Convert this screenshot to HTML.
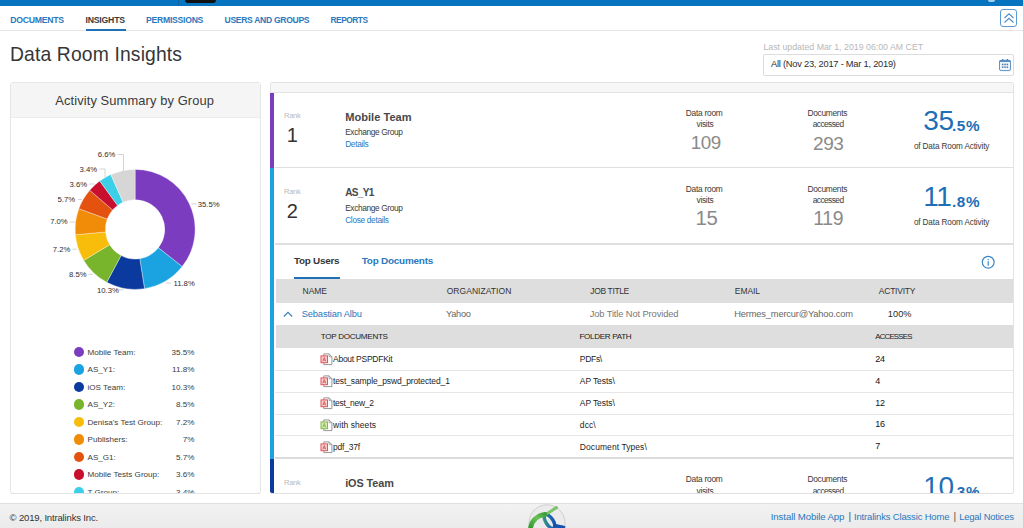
<!DOCTYPE html>
<html><head><meta charset="utf-8"><title>Data Room Insights</title>
<style>
html,body{margin:0;padding:0;}
body{width:1024px;height:528px;overflow:hidden;position:relative;background:#fff;font-family:"Liberation Sans",sans-serif;}
.t{position:absolute;white-space:pre;line-height:1;}
.abs{position:absolute;}
</style></head><body>
<!-- top bar -->
<div class="abs" style="left:0;top:0;width:1023px;height:6.4px;background:#0674bf"></div>
<div class="abs" style="left:185px;top:0;width:31px;height:3.3px;background:#111;border-radius:0 0 3px 3px"></div>
<div class="abs" style="left:178px;top:0;width:1px;height:6px;background:#0a62a4"></div>
<div class="abs" style="left:988px;top:0;width:7px;height:1.5px;background:#9fd0f2;border-radius:0 0 3px 3px"></div>
<!-- nav border -->
<div class="abs" style="left:0;top:30px;width:1024px;height:1px;background:#e6e6e6"></div>
<div class="abs" style="left:85.5px;top:28.5px;width:40px;height:2.5px;background:#1f70b6"></div>
<!-- chevron button -->
<div class="abs" style="left:999.7px;top:9px;width:15.8px;height:16.3px;border:1px solid #5a9ad2;border-radius:3px;box-sizing:content-box"></div>
<svg class="abs" style="left:1000px;top:9px" width="18" height="19" viewBox="0 0 18 19"><polyline points="4.5,9 9,4.8 13.5,9" fill="none" stroke="#4f8fc8" stroke-width="1.1"/><polyline points="4.5,13.5 9,9.3 13.5,13.5" fill="none" stroke="#4f8fc8" stroke-width="1.1"/></svg>
<!-- right scrollbar line -->
<div class="abs" style="left:1023px;top:0;width:1px;height:528px;background:#d0d0d0"></div>
<!-- date box -->
<div class="abs" style="left:763px;top:54px;width:249px;height:20px;border:1px solid #dcdcdc;border-radius:2px;background:#fff;box-sizing:content-box"></div>
<svg class="abs" style="left:998px;top:58px" width="15" height="14" viewBox="0 0 15 14"><rect x="1.5" y="2.3" width="11" height="10.3" rx="1.6" fill="#f0f6fc" stroke="#4a86c0" stroke-width="0.9"/><rect x="1.5" y="2.3" width="11" height="1.6" fill="#4a86c0"/><rect x="4" y="1" width="1.3" height="2" fill="#4a86c0"/><rect x="8.7" y="1" width="1.3" height="2" fill="#4a86c0"/><g fill="#4a78aa"><rect x="3.9" y="5.7" width="1.5" height="1.5"/><rect x="6.25" y="5.7" width="1.5" height="1.5"/><rect x="8.6" y="5.7" width="1.5" height="1.5"/><rect x="3.9" y="8.4" width="1.5" height="1.5"/><rect x="6.25" y="8.4" width="1.5" height="1.5"/><rect x="8.6" y="8.4" width="1.5" height="1.5"/></g></svg>
<!-- left panel -->
<div class="abs" style="left:10px;top:82px;width:249px;height:410px;border:1px solid #e6e6e6;border-radius:3px;background:#fff;box-sizing:content-box;overflow:hidden">
  <div class="abs" style="left:0;top:0;width:249px;height:34px;background:#f5f5f5;border-bottom:1px solid #ececec"></div>
</div>
<div class="abs" style="left:0;top:0;width:260px;height:493px;overflow:hidden">
<svg style="position:absolute;left:0;top:0" width="260" height="300" viewBox="0 0 260 300"><g><path d="M135.10,169.40 A60,60 0 0 1 182.18,266.60 L158.40,247.81 A29.7,29.7 0 0 0 135.10,199.70 Z" fill="#7b3cc0" stroke="#fff" stroke-width="0.35" stroke-linejoin="round"/><path d="M182.18,266.60 A60,60 0 0 1 144.52,288.66 L139.76,258.73 A29.7,29.7 0 0 0 158.40,247.81 Z" fill="#1aa3e0" stroke="#fff" stroke-width="0.35" stroke-linejoin="round"/><path d="M144.52,288.66 A60,60 0 0 1 106.75,282.28 L121.07,255.58 A29.7,29.7 0 0 0 139.76,258.73 Z" fill="#0b3a9e" stroke="#fff" stroke-width="0.35" stroke-linejoin="round"/><path d="M106.75,282.28 A60,60 0 0 1 83.72,260.38 L109.66,244.73 A29.7,29.7 0 0 0 121.07,255.58 Z" fill="#78b52c" stroke="#fff" stroke-width="0.35" stroke-linejoin="round"/><path d="M83.72,260.38 A60,60 0 0 1 75.33,234.69 L105.52,232.02 A29.7,29.7 0 0 0 109.66,244.73 Z" fill="#f7bd0a" stroke="#fff" stroke-width="0.35" stroke-linejoin="round"/><path d="M75.33,234.69 A60,60 0 0 1 78.81,208.64 L107.23,219.12 A29.7,29.7 0 0 0 105.52,232.02 Z" fill="#f08c08" stroke="#fff" stroke-width="0.35" stroke-linejoin="round"/><path d="M78.81,208.64 A60,60 0 0 1 89.71,190.16 L112.63,209.98 A29.7,29.7 0 0 0 107.23,219.12 Z" fill="#e3520e" stroke="#fff" stroke-width="0.35" stroke-linejoin="round"/><path d="M89.71,190.16 A60,60 0 0 1 99.71,180.95 L117.58,205.42 A29.7,29.7 0 0 0 112.63,209.98 Z" fill="#c8102e" stroke="#fff" stroke-width="0.35" stroke-linejoin="round"/><path d="M99.71,180.95 A60,60 0 0 1 110.83,174.53 L123.09,202.24 A29.7,29.7 0 0 0 117.58,205.42 Z" fill="#3bd0e8" stroke="#fff" stroke-width="0.35" stroke-linejoin="round"/><path d="M110.83,174.53 A60,60 0 0 1 135.10,169.40 L135.10,199.70 A29.7,29.7 0 0 0 123.09,202.24 Z" fill="#d6d6d6" stroke="#fff" stroke-width="0.35" stroke-linejoin="round"/></g><g fill="none" stroke="#c8c8c8" stroke-width="0.8"><polyline points="117.5,154.5 123.5,154.5 123.5,171" />
<polyline points="99.5,169 105,169 105,177" />
<polyline points="89,184 94.5,184" />
<polyline points="78,199.5 82,199.5" />
<polyline points="69.8,222 74.9,222" />
<polyline points="72.4,249.2 76.6,249.2" />
<polyline points="88.5,274.4 92.8,274.4" />
<polyline points="118.4,289.8 123.5,289.8" />
<polyline points="166,283 171,283" />
<polyline points="191.5,203.8 196.5,203.8" /></g></svg>
<div style="position:absolute;left:73.8px;top:346.7px;width:10.6px;height:10.6px;border-radius:50%;background:#7b3cc0"></div><div style="position:absolute;left:73.8px;top:364.2px;width:10.6px;height:10.6px;border-radius:50%;background:#1aa3e0"></div><div style="position:absolute;left:73.8px;top:381.7px;width:10.6px;height:10.6px;border-radius:50%;background:#0b3a9e"></div><div style="position:absolute;left:73.8px;top:399.2px;width:10.6px;height:10.6px;border-radius:50%;background:#78b52c"></div><div style="position:absolute;left:73.8px;top:416.7px;width:10.6px;height:10.6px;border-radius:50%;background:#f7bd0a"></div><div style="position:absolute;left:73.8px;top:434.2px;width:10.6px;height:10.6px;border-radius:50%;background:#f08c08"></div><div style="position:absolute;left:73.8px;top:451.7px;width:10.6px;height:10.6px;border-radius:50%;background:#e3520e"></div><div style="position:absolute;left:73.8px;top:469.2px;width:10.6px;height:10.6px;border-radius:50%;background:#c8102e"></div><div style="position:absolute;left:73.8px;top:486.7px;width:10.6px;height:10.6px;border-radius:50%;background:#3bd0e8"></div>
</div>
<!-- right panel -->
<div class="abs" style="left:270px;top:82px;width:742px;height:410px;border:1px solid #e3e3e3;border-radius:2px;background:#fff;box-sizing:content-box;overflow:hidden">
  <div class="abs" style="left:0;top:0;width:742px;height:9px;background:#f7f7f7;border-bottom:1px solid #e3e3e3"></div>
  <div class="abs" style="left:3.5px;top:84px;width:742px;height:1.4px;background:#e0e0e0"></div>
  <div class="abs" style="left:4px;top:160.3px;width:738px;height:1.3px;background:#e0e0e0"></div>
  <div class="abs" style="left:5px;top:195.9px;width:737px;height:24px;background:#dedede"></div>
  <div class="abs" style="left:23px;top:193.5px;width:46px;height:2.5px;background:#1f70b6"></div>
  <div class="abs" style="left:5px;top:241.9px;width:737px;height:22.8px;background:#dedede"></div>
  <div class="abs" style="left:4px;top:286.8px;width:738px;height:1px;background:#e6e6e6"></div>
  <div class="abs" style="left:4px;top:308.6px;width:738px;height:1px;background:#e6e6e6"></div>
  <div class="abs" style="left:4px;top:330.6px;width:738px;height:1px;background:#e6e6e6"></div>
  <div class="abs" style="left:4px;top:352.4px;width:738px;height:1px;background:#e6e6e6"></div>
  <div class="abs" style="left:4px;top:374.3px;width:738px;height:1.5px;background:#dcdcdc"></div>
</div>
<div class="abs" style="left:270px;top:92.8px;width:4px;height:75px;background:#7b3cc0"></div>
<div class="abs" style="left:270px;top:167.8px;width:4px;height:291px;background:#1aa3e0"></div>
<div class="abs" style="left:270px;top:458.8px;width:4px;height:34.7px;background:#0b3a9e;border-radius:0 0 0 2px"></div>
<svg class="abs" style="left:981px;top:255px" width="15" height="15" viewBox="0 0 15 15"><circle cx="7.2" cy="7.2" r="5.9" fill="none" stroke="#3a87c8" stroke-width="1.2"/><rect x="6.6" y="4" width="1.2" height="1.2" fill="#3a87c8"/><rect x="6.6" y="6.2" width="1.2" height="4.6" fill="#3a87c8"/></svg>
<svg class="abs" style="left:282px;top:309px" width="12" height="10" viewBox="0 0 12 10"><polyline points="1.8,7.5 6,3.3 10.2,7.5" fill="none" stroke="#3a7fc0" stroke-width="1.2"/></svg>
<svg width="14" height="14" viewBox="0 0 14 14" style="position:absolute;left:320px;top:353.2px"><path d="M3.8,0.9 h5.3 l2.8,2.8 v7.9 h-8.1 z" fill="#fff" stroke="#8a8a8a" stroke-width="0.9"/><path d="M9.1,0.9 v2.8 h2.8" fill="none" stroke="#8a8a8a" stroke-width="0.7"/><rect x="1" y="2.9" width="6.5" height="6.8" fill="#f8d0d0" stroke="#e0555a" stroke-width="1"/><path d="M2.8,8.3 L4.25,4.4 L5.7,8.3 M3.3,7 H5.2" stroke="#e0555a" stroke-width="0.9" fill="none"/></svg><svg width="14" height="14" viewBox="0 0 14 14" style="position:absolute;left:320px;top:375.09999999999997px"><path d="M3.8,0.9 h5.3 l2.8,2.8 v7.9 h-8.1 z" fill="#fff" stroke="#8a8a8a" stroke-width="0.9"/><path d="M9.1,0.9 v2.8 h2.8" fill="none" stroke="#8a8a8a" stroke-width="0.7"/><rect x="1" y="2.9" width="6.5" height="6.8" fill="#f8d0d0" stroke="#e0555a" stroke-width="1"/><path d="M2.8,8.3 L4.25,4.4 L5.7,8.3 M3.3,7 H5.2" stroke="#e0555a" stroke-width="0.9" fill="none"/></svg><svg width="14" height="14" viewBox="0 0 14 14" style="position:absolute;left:320px;top:397.0px"><path d="M3.8,0.9 h5.3 l2.8,2.8 v7.9 h-8.1 z" fill="#fff" stroke="#8a8a8a" stroke-width="0.9"/><path d="M9.1,0.9 v2.8 h2.8" fill="none" stroke="#8a8a8a" stroke-width="0.7"/><rect x="1" y="2.9" width="6.5" height="6.8" fill="#f8d0d0" stroke="#e0555a" stroke-width="1"/><path d="M2.8,8.3 L4.25,4.4 L5.7,8.3 M3.3,7 H5.2" stroke="#e0555a" stroke-width="0.9" fill="none"/></svg><svg width="14" height="14" viewBox="0 0 14 14" style="position:absolute;left:320px;top:418.9px"><path d="M3.8,0.9 h5.3 l2.8,2.8 v7.9 h-8.1 z" fill="#fff" stroke="#8a8a8a" stroke-width="0.9"/><path d="M9.1,0.9 v2.8 h2.8" fill="none" stroke="#8a8a8a" stroke-width="0.7"/><rect x="1" y="2.9" width="6.5" height="6.8" fill="#d3eab0" stroke="#86b84e" stroke-width="1"/><path d="M2.8,8.3 L4.25,4.4 L5.7,8.3 M3.3,7 H5.2" stroke="#86b84e" stroke-width="0.9" fill="none"/></svg><svg width="14" height="14" viewBox="0 0 14 14" style="position:absolute;left:320px;top:440.79999999999995px"><path d="M3.8,0.9 h5.3 l2.8,2.8 v7.9 h-8.1 z" fill="#fff" stroke="#8a8a8a" stroke-width="0.9"/><path d="M9.1,0.9 v2.8 h2.8" fill="none" stroke="#8a8a8a" stroke-width="0.7"/><rect x="1" y="2.9" width="6.5" height="6.8" fill="#f8d0d0" stroke="#e0555a" stroke-width="1"/><path d="M2.8,8.3 L4.25,4.4 L5.7,8.3 M3.3,7 H5.2" stroke="#e0555a" stroke-width="0.9" fill="none"/></svg>
<!-- clip cover for iOS numbers handled via container -->
<!-- footer -->
<div class="abs" style="left:0;top:503px;width:1023px;height:25px;background:linear-gradient(#f2f2f2,#ebebeb);border-top:1px solid #e0e0e0;box-sizing:border-box"></div>
<svg class="abs" style="left:524px;top:502px" width="48" height="26" viewBox="0 0 48 26">
<defs><linearGradient id="gg" x1="0" y1="1" x2="1" y2="0"><stop offset="0" stop-color="#2f9a2a"/><stop offset="0.6" stop-color="#6cc05a"/><stop offset="1" stop-color="#3f9f3a"/></linearGradient>
<linearGradient id="bg" x1="0" y1="0" x2="1" y2="1"><stop offset="0" stop-color="#3a9a7a"/><stop offset="0.5" stop-color="#1f6fb0"/><stop offset="1" stop-color="#1250b0"/></linearGradient></defs>
<circle cx="23" cy="20.8" r="18" fill="#ebebeb" stroke="#c2c2c2" stroke-width="0.7"/>
<ellipse cx="25.5" cy="19.5" rx="3.6" ry="8" transform="rotate(-33 25.5 19.5)" fill="none" stroke="url(#bg)" stroke-width="3.4"/>
<path d="M29,23.5 C33,24 37,24.5 41,26" fill="none" stroke="#1452b0" stroke-width="3.4"/>
<path d="M21,12.3 C25,11 28,8 32.5,5.6" fill="none" stroke="#7cc46a" stroke-width="3" stroke-linecap="round"/><path d="M6.5,26.5 C7.5,19 13,13.5 21,12.3" fill="none" stroke="url(#gg)" stroke-width="4.8" stroke-linecap="round"/>
</svg>
<div class="t" style="left:10.30px;top:15.75px;font-size:8.68px;font-weight:700;color:#2a78bd;letter-spacing:-0.274px">DOCUMENTS</div>
<div class="t" style="left:85.50px;top:15.73px;font-size:8.70px;font-weight:700;color:#3a3a3a;letter-spacing:-0.212px">INSIGHTS</div>
<div class="t" style="left:146.00px;top:15.77px;font-size:8.65px;font-weight:700;color:#2a78bd;letter-spacing:-0.254px">PERMISSIONS</div>
<div class="t" style="left:224.50px;top:15.84px;font-size:8.57px;font-weight:700;color:#2a78bd;letter-spacing:-0.307px">USERS AND GROUPS</div>
<div class="t" style="left:330.50px;top:16.01px;font-size:8.37px;font-weight:700;color:#2a78bd;letter-spacing:-0.493px">REPORTS</div>
<div class="t" style="left:10.00px;top:45.23px;font-size:19.32px;font-weight:400;color:#363636;letter-spacing:0.142px">Data Room Insights</div>
<div class="t" style="left:763.40px;top:43.07px;font-size:8.77px;font-weight:400;color:#b8b8b8;letter-spacing:0.011px">Last updated Mar 1, 2019 06:00 AM CET</div>
<div class="t" style="left:771.00px;top:60.31px;font-size:9.32px;font-weight:400;color:#2e2e2e;letter-spacing:-0.243px">All (Nov 23, 2017 - Mar 1, 2019)</div>
<div class="t" style="left:55.30px;top:94.57px;font-size:12.90px;font-weight:400;color:#3a3a3a;letter-spacing:0.102px">Activity Summary by Group</div>
<div class="t" style="left:97.80px;top:151.28px;font-size:7.70px;font-weight:400;color:#2e2e2e;letter-spacing:0.000px">6.6%</div>
<div class="t" style="left:79.60px;top:166.08px;font-size:7.70px;font-weight:400;color:#2e2e2e;letter-spacing:0.000px">3.4%</div>
<div class="t" style="left:69.60px;top:181.08px;font-size:7.70px;font-weight:400;color:#2e2e2e;letter-spacing:0.000px">3.6%</div>
<div class="t" style="left:57.50px;top:196.08px;font-size:7.70px;font-weight:400;color:#2e2e2e;letter-spacing:0.000px">5.7%</div>
<div class="t" style="left:50.20px;top:218.48px;font-size:7.70px;font-weight:400;color:#2e2e2e;letter-spacing:0.000px">7.0%</div>
<div class="t" style="left:52.80px;top:245.88px;font-size:7.70px;font-weight:400;color:#2e2e2e;letter-spacing:0.000px">7.2%</div>
<div class="t" style="left:69.00px;top:271.08px;font-size:7.70px;font-weight:400;color:#2e2e2e;letter-spacing:0.000px">8.5%</div>
<div class="t" style="left:97.00px;top:287.08px;font-size:7.70px;font-weight:400;color:#2e2e2e;letter-spacing:0.000px">10.3%</div>
<div class="t" style="left:173.50px;top:280.08px;font-size:7.70px;font-weight:400;color:#2e2e2e;letter-spacing:0.000px">11.8%</div>
<div class="t" style="left:197.80px;top:200.88px;font-size:7.70px;font-weight:400;color:#2e2e2e;letter-spacing:0.000px">35.5%</div>
<div class="t" style="left:87.50px;top:348.94px;font-size:8.10px;font-weight:400;color:#3c3c3c;letter-spacing:0.000px">Mobile Team:</div>
<div class="t" style="left:171.47px;top:348.94px;font-size:8.10px;font-weight:400;color:#3c3c3c;letter-spacing:0.000px">35.5%</div>
<div class="t" style="left:87.50px;top:366.44px;font-size:8.10px;font-weight:400;color:#3c3c3c;letter-spacing:0.000px">AS_Y1:</div>
<div class="t" style="left:172.06px;top:366.44px;font-size:8.10px;font-weight:400;color:#3c3c3c;letter-spacing:0.000px">11.8%</div>
<div class="t" style="left:87.50px;top:383.94px;font-size:8.10px;font-weight:400;color:#3c3c3c;letter-spacing:0.000px">iOS Team:</div>
<div class="t" style="left:171.47px;top:383.94px;font-size:8.10px;font-weight:400;color:#3c3c3c;letter-spacing:0.000px">10.3%</div>
<div class="t" style="left:87.50px;top:401.44px;font-size:8.10px;font-weight:400;color:#3c3c3c;letter-spacing:0.000px">AS_Y2:</div>
<div class="t" style="left:175.95px;top:401.44px;font-size:8.10px;font-weight:400;color:#3c3c3c;letter-spacing:0.000px">8.5%</div>
<div class="t" style="left:87.50px;top:418.94px;font-size:8.10px;font-weight:400;color:#3c3c3c;letter-spacing:0.000px">Denisa's Test Group:</div>
<div class="t" style="left:175.95px;top:418.94px;font-size:8.10px;font-weight:400;color:#3c3c3c;letter-spacing:0.000px">7.2%</div>
<div class="t" style="left:87.50px;top:436.44px;font-size:8.10px;font-weight:400;color:#3c3c3c;letter-spacing:0.000px">Publishers:</div>
<div class="t" style="left:182.70px;top:436.44px;font-size:8.10px;font-weight:400;color:#3c3c3c;letter-spacing:0.000px">7%</div>
<div class="t" style="left:87.50px;top:453.94px;font-size:8.10px;font-weight:400;color:#3c3c3c;letter-spacing:0.000px">AS_G1:</div>
<div class="t" style="left:175.95px;top:453.94px;font-size:8.10px;font-weight:400;color:#3c3c3c;letter-spacing:0.000px">5.7%</div>
<div class="t" style="left:87.50px;top:471.44px;font-size:8.10px;font-weight:400;color:#3c3c3c;letter-spacing:0.000px">Mobile Tests Group:</div>
<div class="t" style="left:175.95px;top:471.44px;font-size:8.10px;font-weight:400;color:#3c3c3c;letter-spacing:0.000px">3.6%</div>
<div class="t" style="left:87.50px;top:488.94px;font-size:8.10px;font-weight:400;color:#3c3c3c;letter-spacing:0.000px">T Group:</div>
<div class="t" style="left:175.95px;top:488.94px;font-size:8.10px;font-weight:400;color:#3c3c3c;letter-spacing:0.000px">3.4%</div>
<div class="t" style="left:283.90px;top:112.37px;font-size:7.59px;font-weight:400;color:#b9b9b9;letter-spacing:-0.231px">Rank</div>
<div class="t" style="left:286.80px;top:125.26px;font-size:20.00px;font-weight:400;color:#333;letter-spacing:0.000px">1</div>
<div class="t" style="left:345.20px;top:111.64px;font-size:11.06px;font-weight:700;color:#484848;letter-spacing:0.030px">Mobile Team</div>
<div class="t" style="left:345.20px;top:127.85px;font-size:8.33px;font-weight:400;color:#3a3a3a;letter-spacing:-0.375px">Exchange Group</div>
<div class="t" style="left:345.20px;top:139.94px;font-size:8.33px;font-weight:400;color:#2a78bd;letter-spacing:-0.327px">Details</div>
<div class="t" style="left:685.80px;top:108.89px;font-size:8.40px;font-weight:400;color:#3a3a3a;letter-spacing:-0.260px">Data room</div>
<div class="t" style="left:696.50px;top:120.19px;font-size:8.40px;font-weight:400;color:#3a3a3a;letter-spacing:-0.289px">visits</div>
<div class="t" style="left:807.50px;top:108.89px;font-size:8.40px;font-weight:400;color:#3a3a3a;letter-spacing:-0.305px">Documents</div>
<div class="t" style="left:812.70px;top:120.19px;font-size:8.40px;font-weight:400;color:#3a3a3a;letter-spacing:-0.564px">accessed</div>
<div class="t" style="left:690.70px;top:133.78px;font-size:18.79px;font-weight:400;color:#8a8a8a;letter-spacing:-0.400px">109</div>
<div class="t" style="left:813.00px;top:133.57px;font-size:19.04px;font-weight:400;color:#8a8a8a;letter-spacing:-0.400px">293</div>
<div class="t" style="left:923.20px;top:106.74px;font-size:28.05px;font-weight:400;color:#1f6fb6;letter-spacing:-0.400px">35</div>
<div class="t" style="left:952.00px;top:117.54px;font-size:15.30px;font-weight:700;color:#1f6fb6;letter-spacing:0.618px">.5%</div>
<div class="t" style="left:913.90px;top:143.47px;font-size:8.18px;font-weight:400;color:#3a3a3a;letter-spacing:-0.131px">of Data Room Activity</div>
<div class="t" style="left:283.90px;top:188.37px;font-size:7.59px;font-weight:400;color:#b9b9b9;letter-spacing:-0.231px">Rank</div>
<div class="t" style="left:286.80px;top:201.26px;font-size:20.00px;font-weight:400;color:#333;letter-spacing:0.000px">2</div>
<div class="t" style="left:345.20px;top:188.48px;font-size:10.06px;font-weight:700;color:#484848;letter-spacing:-0.688px">AS_Y1</div>
<div class="t" style="left:345.20px;top:203.85px;font-size:8.33px;font-weight:400;color:#3a3a3a;letter-spacing:-0.375px">Exchange Group</div>
<div class="t" style="left:345.20px;top:215.96px;font-size:8.31px;font-weight:400;color:#2a78bd;letter-spacing:-0.315px">Close details</div>
<div class="t" style="left:685.80px;top:184.89px;font-size:8.40px;font-weight:400;color:#3a3a3a;letter-spacing:-0.260px">Data room</div>
<div class="t" style="left:696.50px;top:196.19px;font-size:8.40px;font-weight:400;color:#3a3a3a;letter-spacing:-0.289px">visits</div>
<div class="t" style="left:807.50px;top:184.89px;font-size:8.40px;font-weight:400;color:#3a3a3a;letter-spacing:-0.305px">Documents</div>
<div class="t" style="left:812.70px;top:196.19px;font-size:8.40px;font-weight:400;color:#3a3a3a;letter-spacing:-0.564px">accessed</div>
<div class="t" style="left:695.50px;top:208.46px;font-size:20.35px;font-weight:400;color:#8a8a8a;letter-spacing:-0.400px">15</div>
<div class="t" style="left:813.20px;top:209.26px;font-size:19.42px;font-weight:400;color:#8a8a8a;letter-spacing:-0.267px">119</div>
<div class="t" style="left:923.20px;top:182.74px;font-size:28.05px;font-weight:400;color:#1f6fb6;letter-spacing:-0.400px">11</div>
<div class="t" style="left:952.00px;top:193.54px;font-size:15.30px;font-weight:700;color:#1f6fb6;letter-spacing:0.618px">.8%</div>
<div class="t" style="left:913.90px;top:219.47px;font-size:8.18px;font-weight:400;color:#3a3a3a;letter-spacing:-0.131px">of Data Room Activity</div>
<div class="t" style="left:283.90px;top:478.87px;font-size:7.59px;font-weight:400;color:#b9b9b9;letter-spacing:-0.231px">Rank</div>
<div class="t" style="left:345.20px;top:478.29px;font-size:10.87px;font-weight:700;color:#484848;letter-spacing:-0.087px">iOS Team</div>
<div class="t" style="left:685.80px;top:475.39px;font-size:8.40px;font-weight:400;color:#3a3a3a;letter-spacing:-0.260px">Data room</div>
<div class="t" style="left:696.50px;top:486.69px;font-size:8.40px;font-weight:400;color:#3a3a3a;letter-spacing:-0.289px">visits</div>
<div class="t" style="left:807.50px;top:475.39px;font-size:8.40px;font-weight:400;color:#3a3a3a;letter-spacing:-0.305px">Documents</div>
<div class="t" style="left:812.70px;top:486.69px;font-size:8.40px;font-weight:400;color:#3a3a3a;letter-spacing:-0.564px">accessed</div>
<div class="t" style="left:923.20px;top:473.24px;font-size:28.05px;font-weight:400;color:#1f6fb6;letter-spacing:-0.400px">10</div>
<div class="t" style="left:952.00px;top:484.04px;font-size:15.30px;font-weight:700;color:#1f6fb6;letter-spacing:0.618px">.3%</div>
<div class="t" style="left:293.90px;top:255.93px;font-size:9.89px;font-weight:700;color:#363636;letter-spacing:-0.240px">Top Users</div>
<div class="t" style="left:361.70px;top:255.88px;font-size:9.94px;font-weight:700;color:#2a78bd;letter-spacing:-0.219px">Top Documents</div>
<div class="t" style="left:302.50px;top:287.20px;font-size:8.50px;font-weight:400;color:#333;letter-spacing:-0.011px">NAME</div>
<div class="t" style="left:446.70px;top:287.20px;font-size:8.50px;font-weight:400;color:#333;letter-spacing:0.048px">ORGANIZATION</div>
<div class="t" style="left:590.30px;top:287.20px;font-size:8.50px;font-weight:400;color:#333;letter-spacing:-0.366px">JOB TITLE</div>
<div class="t" style="left:734.80px;top:287.20px;font-size:8.50px;font-weight:400;color:#333;letter-spacing:-0.069px">EMAIL</div>
<div class="t" style="left:878.80px;top:287.20px;font-size:8.50px;font-weight:400;color:#333;letter-spacing:-0.228px">ACTIVITY</div>
<div class="t" style="left:301.70px;top:309.91px;font-size:9.32px;font-weight:400;color:#2a78bd;letter-spacing:-0.139px">Sebastian Albu</div>
<div class="t" style="left:446.00px;top:309.98px;font-size:9.23px;font-weight:400;color:#666;letter-spacing:-0.247px">Yahoo</div>
<div class="t" style="left:589.70px;top:309.89px;font-size:9.34px;font-weight:400;color:#777;letter-spacing:-0.117px">Job Title Not Provided</div>
<div class="t" style="left:734.30px;top:309.92px;font-size:9.30px;font-weight:400;color:#666;letter-spacing:-0.169px">Hermes_mercur@Yahoo.com</div>
<div class="t" style="left:887.80px;top:310.01px;font-size:9.20px;font-weight:400;color:#2a2a2a;letter-spacing:0.061px">100%</div>
<div class="t" style="left:320.80px;top:332.84px;font-size:8.10px;font-weight:400;color:#1a1a1a;letter-spacing:-0.294px">TOP DOCUMENTS</div>
<div class="t" style="left:579.40px;top:332.84px;font-size:8.10px;font-weight:400;color:#1a1a1a;letter-spacing:-0.323px">FOLDER PATH</div>
<div class="t" style="left:875.30px;top:333.01px;font-size:7.90px;font-weight:400;color:#1a1a1a;letter-spacing:-0.840px">ACCESSES</div>
<div class="t" style="left:333.00px;top:355.20px;font-size:8.50px;font-weight:400;color:#1e1e1e;letter-spacing:-0.250px">About PSPDFKit</div>
<div class="t" style="left:579.80px;top:355.20px;font-size:8.50px;font-weight:400;color:#1e1e1e;letter-spacing:-0.294px">PDFs\</div>
<div class="t" style="left:875.30px;top:354.78px;font-size:9.00px;font-weight:400;color:#111;letter-spacing:-0.400px">24</div>
<div class="t" style="left:333.00px;top:377.10px;font-size:8.50px;font-weight:400;color:#1e1e1e;letter-spacing:-0.116px">test_sample_pswd_protected_1</div>
<div class="t" style="left:579.80px;top:377.10px;font-size:8.50px;font-weight:400;color:#1e1e1e;letter-spacing:-0.080px">AP Tests\</div>
<div class="t" style="left:875.30px;top:376.68px;font-size:9.00px;font-weight:400;color:#111;letter-spacing:-0.400px">4</div>
<div class="t" style="left:333.00px;top:399.00px;font-size:8.50px;font-weight:400;color:#1e1e1e;letter-spacing:-0.269px">test_new_2</div>
<div class="t" style="left:579.80px;top:399.00px;font-size:8.50px;font-weight:400;color:#1e1e1e;letter-spacing:-0.080px">AP Tests\</div>
<div class="t" style="left:875.30px;top:398.58px;font-size:9.00px;font-weight:400;color:#111;letter-spacing:-0.400px">12</div>
<div class="t" style="left:333.00px;top:420.90px;font-size:8.50px;font-weight:400;color:#1e1e1e;letter-spacing:0.054px">with sheets</div>
<div class="t" style="left:579.80px;top:420.90px;font-size:8.50px;font-weight:400;color:#1e1e1e;letter-spacing:0.108px">dcc\</div>
<div class="t" style="left:875.30px;top:420.48px;font-size:9.00px;font-weight:400;color:#111;letter-spacing:-0.400px">16</div>
<div class="t" style="left:333.00px;top:442.80px;font-size:8.50px;font-weight:400;color:#1e1e1e;letter-spacing:-0.221px">pdf_37f</div>
<div class="t" style="left:579.80px;top:442.80px;font-size:8.50px;font-weight:400;color:#1e1e1e;letter-spacing:0.072px">Document Types\</div>
<div class="t" style="left:875.30px;top:442.38px;font-size:9.00px;font-weight:400;color:#111;letter-spacing:-0.400px">7</div>
<div class="t" style="left:9.60px;top:512.65px;font-size:9.50px;font-weight:400;color:#333;letter-spacing:-0.158px">© 2019, Intralinks Inc.</div>
<div class="t" style="left:770.80px;top:512.03px;font-size:9.65px;font-weight:400;color:#2a78bd;letter-spacing:-0.104px">Install Mobile App</div>
<div class="t" style="left:848.50px;top:511.58px;font-size:10.17px;font-weight:400;color:#555;letter-spacing:0.000px">|</div>
<div class="t" style="left:854.00px;top:512.15px;font-size:9.51px;font-weight:400;color:#2a78bd;letter-spacing:-0.170px">Intralinks Classic Home</div>
<div class="t" style="left:953.60px;top:511.58px;font-size:10.17px;font-weight:400;color:#555;letter-spacing:0.000px">|</div>
<div class="t" style="left:959.20px;top:512.19px;font-size:9.45px;font-weight:400;color:#2a78bd;letter-spacing:-0.206px">Legal Notices</div>
<div class="abs" style="left:0;top:493.6px;width:1023px;height:9.4px;background:#fff"></div>
<div class="abs" style="left:11px;top:493.3px;width:249px;height:1px;background:#e3e3e3"></div>
<div class="abs" style="left:271px;top:493.3px;width:742px;height:1px;background:#e0e0e0"></div>
</body></html>
